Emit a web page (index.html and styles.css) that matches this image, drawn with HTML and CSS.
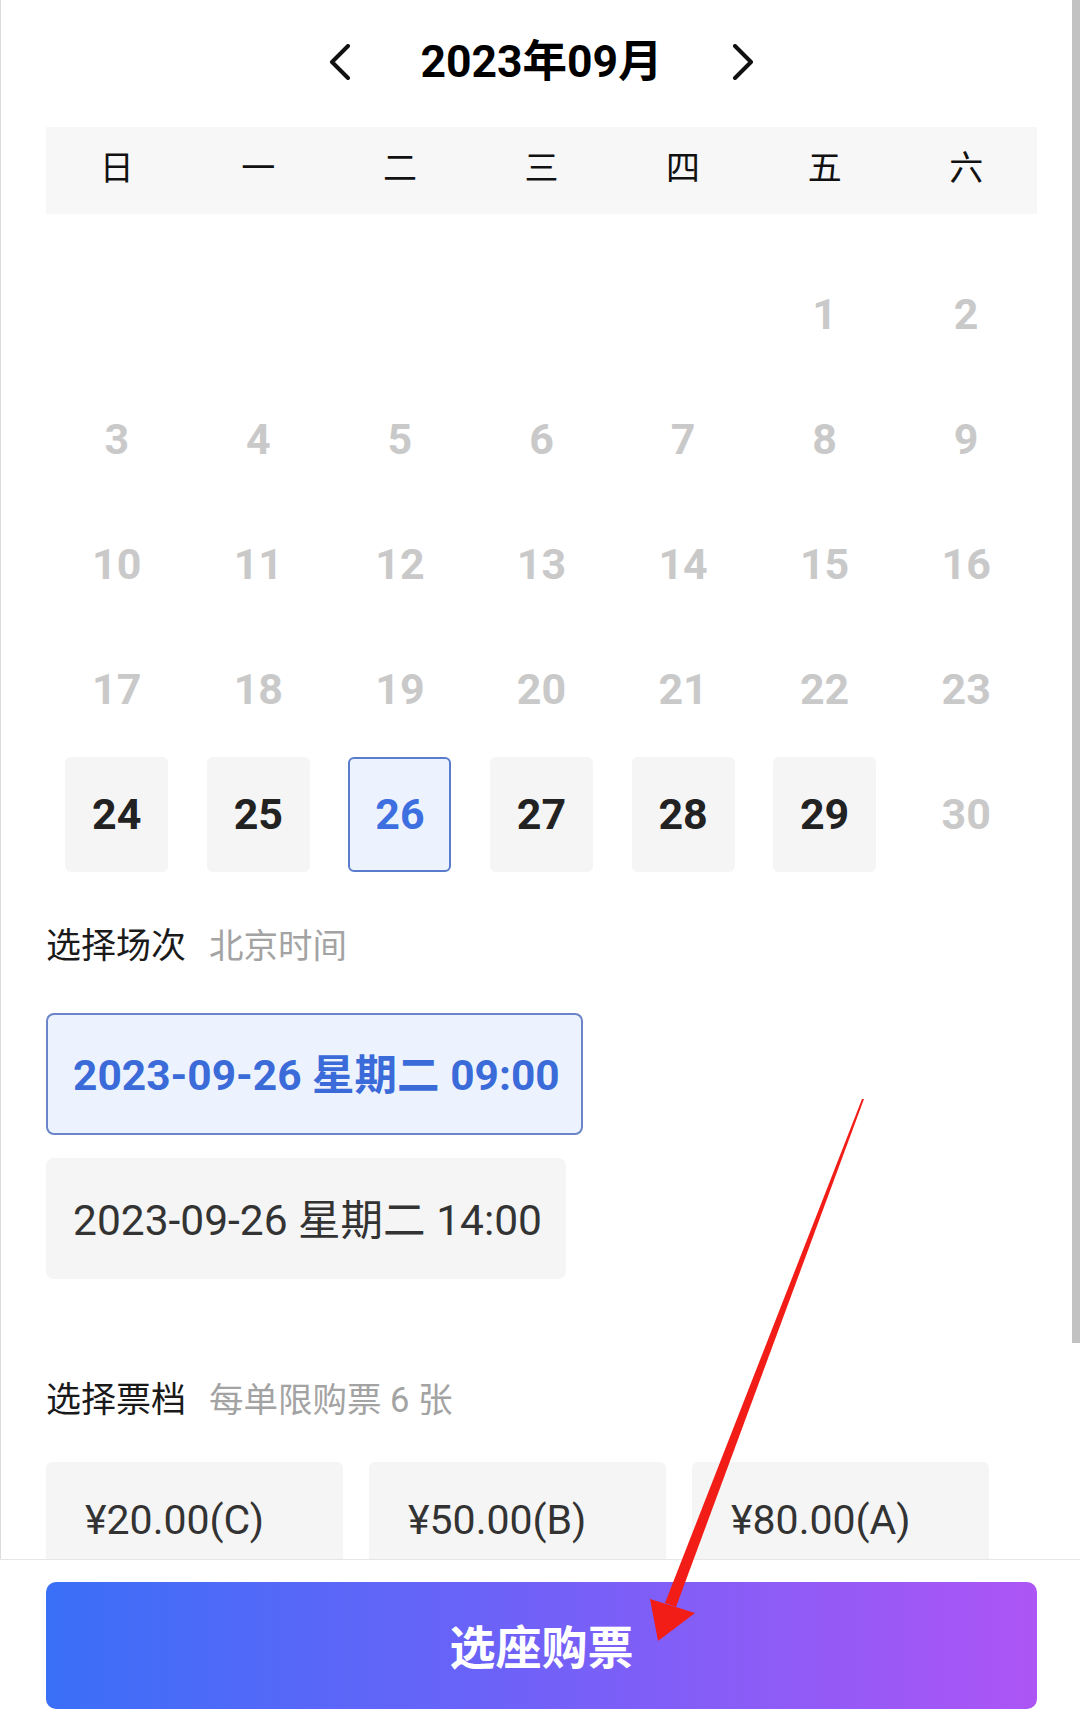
FILE: index.html
```html
<!DOCTYPE html>
<html lang="zh-CN">
<head>
    <meta charset="UTF-8">
    <meta name="viewport" content="width=device-width, initial-scale=1.0">
    <title>选择场次</title>
    <link rel="stylesheet" href="styles.css">
</head>
<body>
    <div class="page">
        <div class="month-bar">
            <button class="nav-btn" aria-label="上个月">
                <svg viewBox="0 0 24 36" width="24" height="36"><polyline points="20,2 4,18 20,34" /></svg>
            </button>
            <h1>2023年09月</h1>
            <button class="nav-btn" aria-label="下个月">
                <svg viewBox="0 0 24 36" width="24" height="36"><polyline points="4,2 20,18 4,34" /></svg>
            </button>
        </div>

        <div class="weekdays">
            <span>日</span><span>一</span><span>二</span><span>三</span><span>四</span><span>五</span><span>六</span>
        </div>

        <div class="days">
            <span></span><span></span><span></span><span></span><span></span>
            <span class="day">1</span><span class="day">2</span>
            <span class="day">3</span><span class="day">4</span><span class="day">5</span><span class="day">6</span><span class="day">7</span><span class="day">8</span><span class="day">9</span>
            <span class="day">10</span><span class="day">11</span><span class="day">12</span><span class="day">13</span><span class="day">14</span><span class="day">15</span><span class="day">16</span>
            <span class="day">17</span><span class="day">18</span><span class="day">19</span><span class="day">20</span><span class="day">21</span><span class="day">22</span><span class="day">23</span>
            <span class="day open">24</span><span class="day open">25</span><span class="day open active">26</span><span class="day open">27</span><span class="day open">28</span><span class="day open">29</span><span class="day">30</span>
        </div>

        <div class="section-head">
            <span>选择场次</span>
            <span class="hint">北京时间</span>
        </div>
        <div class="sessions">
            <div class="session active">2023-09-26 星期二 09:00</div>
            <div class="session">2023-09-26 星期二 14:00</div>
        </div>

        <div class="section-head tickets-head">
            <span>选择票档</span>
            <span class="hint">每单限购票 6 张</span>
        </div>
        <div class="tickets">
            <div class="ticket">¥20.00(C)</div>
            <div class="ticket">¥50.00(B)</div>
            <div class="ticket">¥80.00(A)</div>
        </div>
    </div>

    <div class="scroll-thumb"></div>

    <div class="footer">
        <button class="buy-btn">选座购票</button>
    </div>

    <!-- red pointer arrow drawn over the page -->
    <svg class="pointer" viewBox="0 0 1080 1727" width="1080" height="1727">
        <polygon points="864,1099 862,1099 665,1603 676,1607" />
        <polygon points="650,1599 695,1613 658,1641" />
    </svg>
</body>
</html>
```

FILE: styles.css
```css
* {
    box-sizing: border-box;
}

html, body {
    margin: 0;
    padding: 0;
    overflow: hidden;
    background: #fff;
}

body {
    font-family: Roboto, "Noto Sans CJK SC", sans-serif;
    color: #1c1c1c;
}

.page {
    height: 1727px;
    padding: 0 43px 0 45px;
    border-left: 1px solid #dcdcdc;
}

/* month switcher */
.month-bar {
    height: 124px;
    display: flex;
    align-items: center;
    justify-content: center;
    gap: 68px;
}

.month-bar h1 {
    margin: 0;
    font-size: 44.5px;
    font-weight: 700;
    line-height: 1;
    color: #000;
}

.nav-btn {
    padding: 0;
    border: none;
    background: none;
    width: 24px;
    height: 36px;
}

.nav-btn svg {
    display: block;
    fill: none;
    stroke: #111;
    stroke-width: 4;
    stroke-linecap: round;
    stroke-linejoin: round;
}

/* calendar */
.weekdays {
    margin-top: 3px;
    height: 87px;
    padding-bottom: 5px;
    background: #f7f7f7;
    display: grid;
    grid-template-columns: repeat(7, 1fr);
    align-items: center;
    text-align: center;
    font-size: 34px;
    line-height: 1;
    color: #111;
}

.days {
    display: grid;
    grid-template-columns: repeat(7, 1fr);
    grid-auto-rows: 115px;
    row-gap: 10px;
    padding-top: 43px;
}

.day {
    justify-self: center;
    width: 103px;
    display: flex;
    align-items: center;
    justify-content: center;
    font-size: 43px;
    font-weight: 700;
    line-height: 1;
    color: #c9c9c9;
    border-radius: 6px;
}

.day.open {
    background: #f5f5f5;
    color: #222;
}

.day.active {
    background: #edf3fe;
    border: 2px solid #5a7ccc;
    color: #3d6fe0;
}

/* sections */
.section-head {
    margin-top: 50px;
    height: 48px;
    display: flex;
    align-items: center;
    gap: 23px;
    font-size: 35px;
    line-height: 1;
    color: #1a1a1a;
}

.section-head .hint {
    font-size: 34.5px;
    color: #a3a3a3;
}

.tickets-head {
    margin-top: 97px;
}

.sessions {
    margin-top: 43px;
    display: flex;
    flex-direction: column;
    align-items: flex-start;
    gap: 23px;
}

.session {
    height: 121px;
    padding: 6px 24px 0 27px;
    display: flex;
    align-items: center;
    background: #f5f5f5;
    border-radius: 8px;
    font-size: 42.5px;
    line-height: 1;
    color: #333;
}

.session.active {
    height: 122px;
    padding: 4px 21px 0 25px;
    background: #edf3fe;
    border: 2px solid #6a86c8;
    color: #3a6bd9;
    font-weight: 700;
}

.tickets {
    margin-top: 38px;
    display: flex;
    gap: 26px;
}

.ticket {
    width: 297px;
    height: 116px;
    padding-left: 39px;
    display: flex;
    align-items: center;
    background: #f5f5f5;
    border-radius: 6px;
    font-size: 41px;
    line-height: 1;
    color: #333;
}

/* bottom bar */
.footer {
    position: fixed;
    left: 0;
    right: 0;
    bottom: 0;
    height: 168px;
    padding: 22px 43px 0 46px;
    background: #fff;
    border-top: 1px solid #e6e6e6;
}

.buy-btn {
    width: 100%;
    height: 127px;
    border: none;
    border-radius: 10px;
    background: linear-gradient(90deg, #3a6ff8 0%, #6c62f8 45%, #ad55f5 100%);
    color: #fff;
    font-family: "Noto Sans CJK SC", sans-serif;
    font-size: 46px;
    font-weight: 700;
    padding-bottom: 4px;
}

.scroll-thumb {
    position: fixed;
    top: 0;
    right: 0;
    width: 8px;
    height: 1343px;
    background: #c2c2c2;
}

.pointer {
    position: fixed;
    left: 0;
    top: 0;
    pointer-events: none;
    z-index: 10;
}

.pointer polygon {
    fill: #f21d16;
}
```
